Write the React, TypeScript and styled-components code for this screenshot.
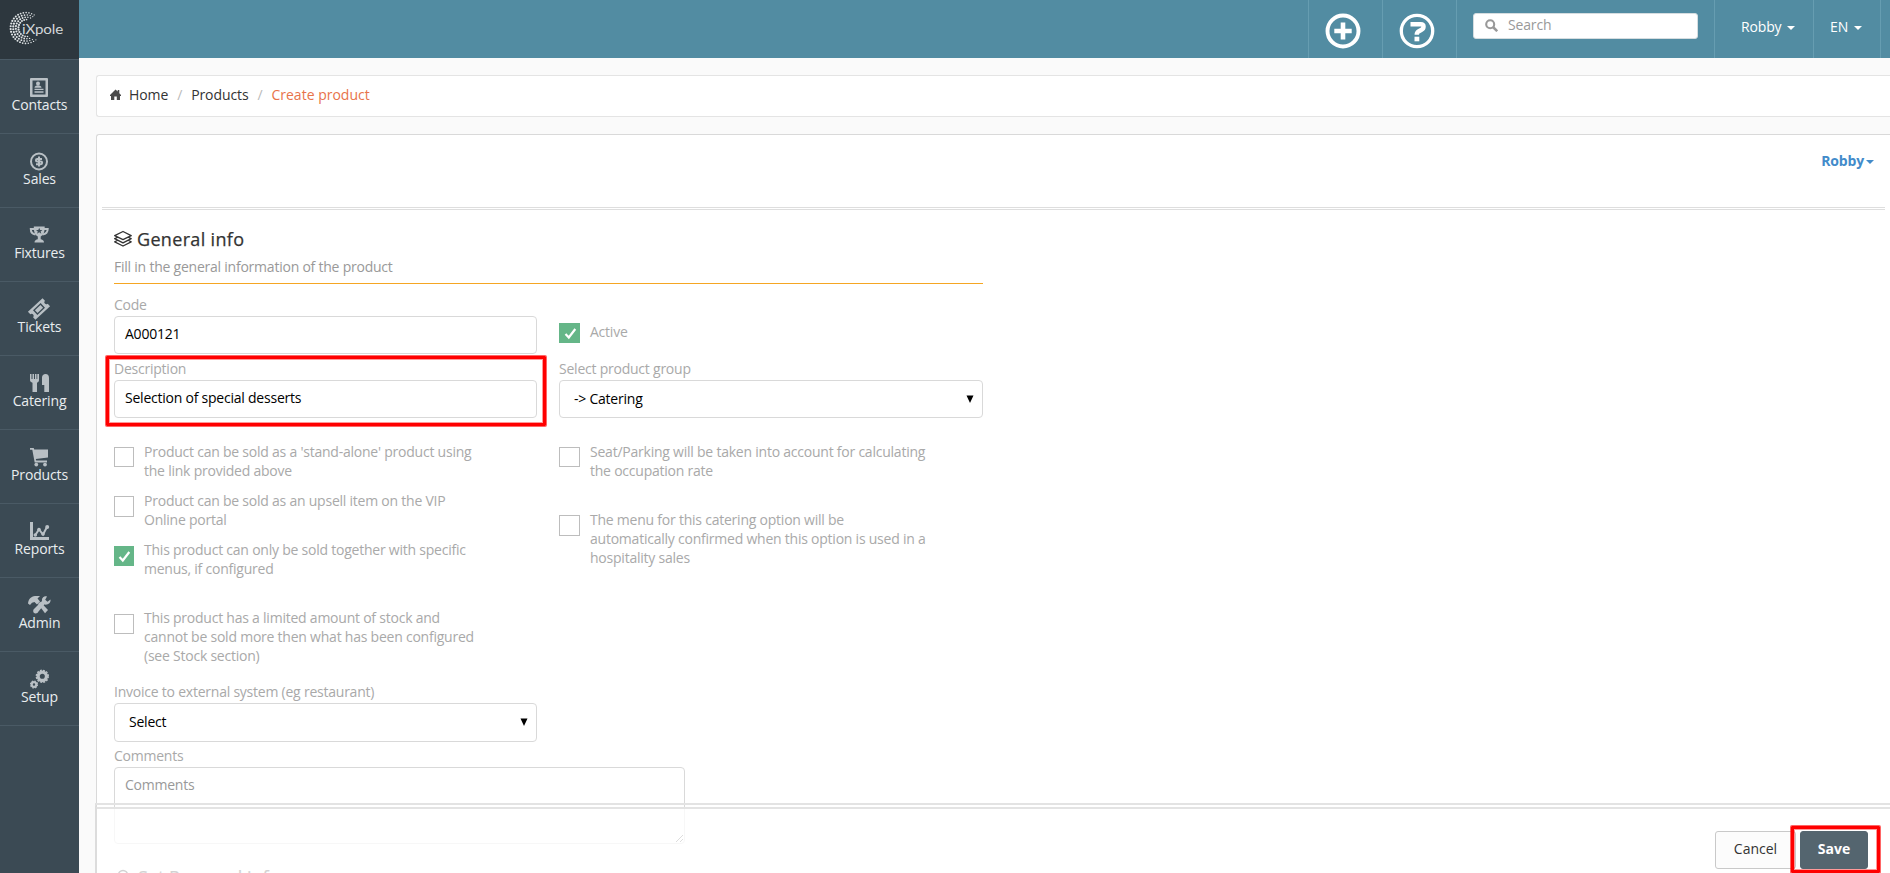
import React from "react";
import styled, { createGlobalStyle } from "styled-components";

const Global = createGlobalStyle`
  * { box-sizing: border-box; }
  html, body { margin: 0; padding: 0; overflow: hidden; }
  body { font-family: "Open Sans", "Noto Sans", sans-serif; font-size: 14px; line-height: 20px; color: #333; background: #fafafa; letter-spacing: -0.15px; }
  input, select, textarea, button { font: inherit; letter-spacing: inherit; }
`;

const Page = styled.div`
  position: relative;
  display: flex;
  width: 1890px;
  height: 873px;
  overflow: hidden;
`;
const Sidebar = styled.nav`
  width: 79px;
  flex: none;
  background: #3b4a54;
`;
const Logo = styled.div`
  height: 59px;
  background: #2d373e;
  svg { display: block; }
`;
const NavItem = styled.a<{ $last?: boolean }>`
  display: flex;
  flex-direction: column;
  align-items: center;
  height: ${(p) => (p.$last ? 75 : 74)}px;
  padding-top: 18px;
  border-top: 1px solid #4a5a65;
  border-bottom: ${(p) => (p.$last ? "1px solid #4a5a65" : "none")};
  color: #e9edef;
  line-height: 18px;
  svg { display: block; margin: 0 1px -1px 0; color: #b9c0c5; overflow: visible; }
`;
const Main = styled.div`
  flex: 1;
  min-width: 0;
  display: flex;
  flex-direction: column;
`;
const Header = styled.header`
  display: flex;
  justify-content: flex-end;
  height: 58px;
  flex: none;
  background: #528ca2;
`;
const HeaderCell = styled.div<{ $w: number; $pad?: string }>`
  width: ${(p) => p.$w}px;
  padding: ${(p) => p.$pad ?? "0"};
  border-left: 1px solid #669db1;
  color: #fff;
`;
const SearchBox = styled.label`
  display: flex;
  align-items: center;
  width: 225px;
  height: 26px;
  padding: 0 0 2px 11px;
  border: 1px solid #d5dde0;
  border-radius: 3px;
  background: #fff;
  color: #999;
  input { border: 0; outline: 0; padding: 0 0 1px; margin-left: 10px; width: 160px; color: #666; background: none; }
  input::placeholder { color: #999; opacity: 1; }
`;
const Caret = styled.i<{ $gap: number }>`
  display: inline-block;
  margin-left: ${(p) => p.$gap}px;
  vertical-align: middle;
  border: 4px solid transparent;
  border-top-color: currentColor;
  border-bottom: 0;
`;
const Content = styled.main`
  flex: 1;
  min-height: 0;
  display: flex;
  flex-direction: column;
  gap: 17px;
  padding: 17px 0 0 17px;
`;
const Crumbs = styled.div`
  display: flex;
  flex: none;
  align-items: center;
  height: 42px;
  padding: 0 0 3px 13px;
  border: 1px solid #e4e4e4;
  border-right: 0;
  border-radius: 3px 0 0 3px;
  background: #fff;
  letter-spacing: -0.1px;
  svg { margin-right: 8px; }
`;
const Slash = styled.span`
  width: 23px;
  text-align: center;
  color: #bbb;
`;
const Current = styled.span`
  color: #e8734a;
  letter-spacing: 0;
`;
const Panel = styled.section`
  flex: 1;
  min-height: 0;
  border: 1px solid #d9d9d9;
  border-right: 0;
  border-bottom: 0;
  border-radius: 3px 0 0 0;
  background: #fff;
  padding: 0 5px;
`;
const PanelTop = styled.div`
  display: flex;
  justify-content: flex-end;
  height: 75px;
  padding: 16px 11px 0 0;
  border-bottom: 3px double #dedede;
  color: #428bca;
  font-weight: 700;
`;
const Form = styled.div`
  width: 869px;
  margin-left: 12px;
  letter-spacing: -0.23px;
`;
const Title = styled.h2<{ $spacing?: number }>`
  display: flex;
  align-items: center;
  height: 26px;
  margin: 0;
  font-size: 18px;
  font-weight: 500;
  line-height: 26px;
  letter-spacing: ${(p) => p.$spacing ?? 0}px;
  -webkit-text-stroke: 0.25px currentColor;
  svg { margin-right: 4px; }
`;
const SectionHead = styled.div<{ $top?: number }>`
  height: 74px;
  padding-top: ${(p) => p.$top ?? 16}px;
  border-bottom: 1px solid #f5a623;
`;
const Hint = styled.div`
  margin-top: 5px;
  color: #999;
`;
const Columns = styled.div<{ $top: number }>`
  display: grid;
  grid-template-columns: 423px 424px;
  column-gap: 22px;
  padding-top: ${(p) => p.$top}px;
`;
const Field = styled.div`
  height: 64px;
`;
const Label = styled.div`
  height: 21px;
  color: #a9a9a9;
`;
const Box = styled.div<{ $select?: boolean; $tall?: boolean }>`
  display: flex;
  align-items: center;
  justify-content: space-between;
  height: ${(p) => (p.$tall ? 39 : 38)}px;
  padding: 0 ${(p) => (p.$select ? "8px 1px 14px" : "10px 3px 10px")};
  border: 1px solid #d9d9d9;
  border-radius: 4px;
  color: #000;
  background: #fff;
`;
const TextArea = styled.textarea`
  display: block;
  width: 571px;
  height: 77px;
  padding: 7px 10px;
  border: 1px solid #d9d9d9;
  border-radius: 4px;
  outline: 0;
  &::placeholder { color: #999; opacity: 1; }
`;
const CheckRow = styled.div<{ $h: number; $top?: number }>`
  display: flex;
  height: ${(p) => p.$h}px;
  padding-top: ${(p) => p.$top ?? 0}px;
  line-height: 19px;
  white-space: pre-line;
  color: #a9a9a9;
`;
const Check = styled.span<{ $on?: boolean; $top: number; $w: number; $tall: number }>`
  width: ${(p) => p.$w}px;
  height: ${(p) => p.$tall}px;
  flex: none;
  margin: ${(p) => p.$top}px 10px 0 0;
  border: ${(p) => (p.$on ? "none" : "1px solid #bdbdbd")};
  background: ${(p) => (p.$on ? "#65b688" : "#fff")};
  svg { display: block; margin: 0 auto; }
`;
const Footer = styled.footer`
  position: absolute;
  left: 95px;
  right: 0;
  bottom: 0;
  height: 70px;
  display: flex;
  justify-content: flex-end;
  gap: 4px;
  padding: 22px 22px 0 0;
  border-top: 6px double #e3e3e3;
  border-left: 2px solid #dcdcdc;
  background: rgba(255, 255, 255, 0.78);
  background-clip: padding-box;
`;
const Button = styled.button<{ $primary?: boolean }>`
  width: ${(p) => (p.$primary ? 68 : 81)}px;
  height: 38px;
  padding: 0 0 2px;
  border: 1px solid ${(p) => (p.$primary ? "#54656f" : "#c9c9c9")};
  border-radius: 3px;
  background: ${(p) => (p.$primary ? "#54656f" : "#fcfcfc")};
  color: ${(p) => (p.$primary ? "#fff" : "#333")};
  font-weight: ${(p) => (p.$primary ? 700 : 400)};
  letter-spacing: 0;
`;
const Highlight = styled.div<{ $x: number; $y: number; $w: number; $h: number }>`
  position: absolute;
  left: ${(p) => p.$x}px;
  top: ${(p) => p.$y}px;
  width: ${(p) => p.$w}px;
  height: ${(p) => p.$h}px;
  border: 3px solid #f00;
  border-radius: 1px;
  box-shadow: 0 0 0 1px rgba(255, 0, 0, 0.6), inset 0 0 0 1px rgba(255, 0, 0, 0.4);
  pointer-events: none;
`;

const icons: Record<string, React.ReactNode> = {
  Contacts: (
    <g fill="currentColor">
      <path fillRule="evenodd" d="M1 0h16a1 1 0 0 1 1 1v17a1 1 0 0 1-1 1H1a1 1 0 0 1-1-1V1a1 1 0 0 1 1-1zM2.500 2.500v14h13v-14z" />
      <circle cx="8" cy="5.500" r="2" />
      <path d="M4.500 9.800c0-1.800 1.500-2 3.500-2.500 2 .5 3.500.7 3.500 2.500zM4.500 10.800h9v1.300h-9zM4.500 13.300h9v1.400h-9z" />
    </g>
  ),
  Sales: (
    <g fill="none" stroke="currentColor">
      <circle cx="9" cy="9.500" r="8" strokeWidth="2" />
      <path d="M12 7H7.200a1.200 1.200 0 0 0 0 2.500h3.600a1.200 1.200 0 0 1 0 2.700H6M9 4.500v10" strokeWidth="2" />
    </g>
  ),
  Fixtures: (
    <g>
      <path fill="none" stroke="currentColor" strokeWidth="2" d="M4 3H.8c0 3.500 1.500 5 4.700 5.500M14 3h3.700c0 3.500-2 5-5.200 5.500" />
      <path fill="currentColor" d="M3.800 .5h10.900c0 5-.9 8.500-4 10v2.700c1.500.3 3.300 1 3.300 3.300H4.500c0-2.300 1.800-3 3.300-3.300v-2.700C4.700 9 3.800 5.500 3.800 .5z" />
      <path fill="#3b4a54" d="M9.200 1.800l.9 2.200h2.300l-1.800 1.400.7 2.300-2.100-1.400-2.100 1.400.7-2.300L6 4h2.300z" />
    </g>
  ),
  Tickets: (
    <g transform="rotate(-43 9 9)">
      <path fill="currentColor" fillRule="evenodd" d="M-1 3.500h20v3.500a2 2 0 0 0 0 4v3.500H-1v-3.500a2 2 0 0 0 0-4zM3.800 5.800v6.400h10.400V5.800zM5.200 7.100h7.600v3.800H5.200z" />
    </g>
  ),
  Catering: (
    <path fill="currentColor" d="M0 0h1.500v5h1V0H4v5h1V0h1.500v5h.8V0H9v6c0 1.500-.8 2-2 2.700V18H2.500V8.700C1 8 0 7.500 0 6zM12 3.500c0-2.300 1.500-3.500 3.500-3.500 2.300 0 3.500 1.500 3.500 4v14h-4.700v-7H12z" />
  ),
  Products: (
    <g fill="currentColor">
      <path d="M0 0h3.700l.5 1.500H18v8L5.800 11l.4 1.500H17v2H4.700L2.300 1.800H0z" />
      <circle cx="6.300" cy="16.600" r="1.900" /><circle cx="15" cy="16.600" r="1.900" />
    </g>
  ),
  Reports: (
    <g fill="none" stroke="currentColor">
      <path d="M1.500 0v16.500H19" strokeWidth="3" />
      <path d="M5 13.500L9 7.500l4 5L17 5" strokeWidth="2" />
      <g fill="currentColor" stroke="none"><circle cx="5.300" cy="13" r="1.800" /><circle cx="9" cy="7.500" r="1.800" /><circle cx="13" cy="12" r="1.800" /><circle cx="17.200" cy="5" r="2" /></g>
    </g>
  ),
  Admin: (
    <g fill="currentColor">
      <path d="M-2 7.500C-1.500 3 1 .5 5 0h5L7.500 2.500 10 5.500 7 8.500 4.500 6 2 6.800 0 9z" />
      <path d="M8 8l2.300-2.300L18 14l-3 3.300z" />
      <path d="M20.500 3.500l-3 2.300-2.300-2L17 .5c-3-1-5.500 1.500-5 4.500L4 13c-1.500 1.500-.8 4.300 1.500 4.500 1.300.1 2.300-.8 2.800-1.700l6-7.300c3.700.7 6.700-1.500 6.200-5z" />
    </g>
  ),
  Setup: (
    <g fill="none" stroke="currentColor">
      <circle cx="12.300" cy="6.300" r="4.200" strokeWidth="3.300" />
      <circle cx="12.300" cy="6.300" r="6" strokeWidth="1.400" strokeDasharray="1.900 1.240" />
      <circle cx="4" cy="14.500" r="2.300" strokeWidth="2.200" />
      <circle cx="4" cy="14.500" r="3.500" strokeWidth="1.200" strokeDasharray="1.500 1.250" />
    </g>
  ),
};

const LogoMark = () => {
  const dots: React.ReactNode[] = [];
  for (let ring = 0; ring < 4; ring++) {
    const r = 15.4 - ring * 2.3;
    const end = 312 - ring * 10;
    for (let a = 50 + ring * 12; a < end; a += 10.5 + ring * 2) {
      const t = (a * Math.PI) / 180;
      const edge = Math.sin(((a - 30) / 300) * Math.PI);
      dots.push(<circle key={`${ring}-${a}`} cx={26 + ring * 0.3 + r * Math.cos(t)} cy={28 + r * Math.sin(t)} r={0.45 + 0.65 * Math.max(0, edge)} />);
    }
  }
  return (
    <svg width="79" height="59" viewBox="0 0 79 59">
      <g fill="#dfe3e5">{dots}</g>
      <text x="22" y="34" fontFamily="Lato, sans-serif" fontSize="14" fontWeight="400" fill="#d3d8da" textLength="41" lengthAdjust="spacingAndGlyphs">iXpole</text>
    </svg>
  );
};

const Tick = () => (
  <svg width="20" height="20" viewBox="0 0 20 20">
    <path d="M5.500 11l3.300 3.500L15.300 6" fill="none" stroke="#fff" strokeWidth="2.200" />
  </svg>
);
const Layers = () => (
  <svg width="19" height="18" viewBox="0 0 19 18" fill="none" stroke="#333" strokeWidth="1.300" strokeLinejoin="round">
    <path d="M9 1.500L17.200 5.600 9 9.700 .7 5.600zM3.200 7.500L.7 8.700l8.300 4.100 8.200-4.100-2.500-1.200M3.200 10.500L.7 11.800 9 16l8.200-4.200-2.500-1.300" />
  </svg>
);
const Arrow = () => (
  <svg width="8" height="8" viewBox="0 0 8 8"><path d="M.5 .5h7L4 8z" fill="#000" /></svg>
);

type CheckItemProps = { h: number; on?: boolean; text: string; top?: number; boxTop?: number; w?: number; tall?: number };
const CheckItem = ({ h, on, text, top = 0, boxTop = 5, w = 20, tall = 20 }: CheckItemProps) => (
  <CheckRow $h={h} $top={top}>
    <Check $on={on} $top={boxTop} $w={w} $tall={tall}>{on && <Tick />}</Check>
    <span>{text}</span>
  </CheckRow>
);

export default function App() {
  const names = Object.keys(icons);
  return (
    <Page>
      <Global />
      <Sidebar>
        <Logo><LogoMark /></Logo>
        {names.map((n, i) => (
          <NavItem key={n} $last={i === names.length - 1}>
            <svg width="18" height="19" viewBox="0 0 18 19">{icons[n]}</svg>
            {n}
          </NavItem>
        ))}
      </Sidebar>
      <Main>
        <Header>
          <HeaderCell $w={74} $pad="13px 0 0 16px">
            <svg width="36" height="36" viewBox="0 0 36 36" fill="none" stroke="#fff">
              <circle cx="18" cy="18" r="15.500" strokeWidth="3.900" />
              <path d="M18 9.500v17M9.300 18h17.400" strokeWidth="4.600" />
            </svg>
          </HeaderCell>
          <HeaderCell $w={74} $pad="13px 0 0 16px">
            <svg width="36" height="36" viewBox="0 0 36 36" fill="none" stroke="#fff">
              <circle cx="18" cy="18" r="15.700" strokeWidth="3.300" />
              <path d="M11.500 11.200h10.300q2.700 0 2.700 2.300t-2 3.300l-3 1.600q-1.700 1-1.700 3.300" strokeWidth="4.500" />
              <path d="M15.500 26h4.800" strokeWidth="4.600" />
            </svg>
          </HeaderCell>
          <HeaderCell $w={258} $pad="13px 0 0 16px">
            <SearchBox>
              <svg width="13" height="13" viewBox="0 0 13 13" fill="none" stroke="#999">
                <circle cx="5.200" cy="5.200" r="4" strokeWidth="2.100" /><path d="M8 8l4.200 4.200" strokeWidth="2.500" />
              </svg>
              <input placeholder="Search" />
            </SearchBox>
          </HeaderCell>
          <HeaderCell $w={99} $pad="17px 0 0 26px">Robby<Caret $gap={6} /></HeaderCell>
          <HeaderCell $w={67} $pad="17px 0 0 16px">EN<Caret $gap={6} /></HeaderCell>
          <HeaderCell $w={10} />
        </Header>
        <Content>
          <Crumbs>
            <svg width="11" height="11" viewBox="0 0 11 11" fill="#4a4a4a"><path d="M5.500 .5L7.700 2.600V1h1.600v3.200L11 6v1h-1v4H6.800V7.500H4.300V11H1V7H0V6z" /></svg>
            Home<Slash>/</Slash>Products<Slash>/</Slash><Current>Create product</Current>
          </Crumbs>
          <Panel>
            <PanelTop><span>Robby<Caret $gap={2} /></span></PanelTop>
            <Form>
              <SectionHead>
                <Title $spacing={0.33}><Layers />General info</Title>
                <Hint>Fill in the general information of the product</Hint>
              </SectionHead>
              <Columns $top={11}>
                <div>
                  <Field><Label>Code</Label><Box>A000121</Box></Field>
                  <Field><Label>Description</Label><Box>Selection of special desserts</Box></Field>
                </div>
                <div>
                  <CheckItem h={64} top={27} boxTop={1} w={21} on text="Active" />
                  <Field><Label>Select product group</Label><Box $select><span>-&gt; Catering</span><Arrow /></Box></Field>
                </div>
              </Columns>
              <Columns $top={19}>
                <div>
                  <CheckItem h={49} text={"Product can be sold as a 'stand-alone' product using\nthe link provided above"} />
                  <CheckItem h={49} tall={21} text={"Product can be sold as an upsell item on the VIP\nOnline portal"} />
                  <CheckItem h={68} boxTop={6} on text={"This product can only be sold together with specific\nmenus, if configured"} />
                  <CheckItem h={74} boxTop={6} text={"This product has a limited amount of stock and\ncannot be sold more then what has been configured\n(see Stock section)"} />
                </div>
                <div>
                  <CheckItem h={68} w={21} text={"Seat/Parking will be taken into account for calculating\nthe occupation rate"} />
                  <CheckItem h={68} w={21} tall={21} text={"The menu for this catering option will be\nautomatically confirmed when this option is used in a\nhospitality sales"} />
                </div>
              </Columns>
              <Columns $top={0}>
                <div>
                  <Field><Label>Invoice to external system (eg restaurant)</Label><Box $select $tall><span>Select</span><Arrow /></Box></Field>
                  <Label>Comments</Label>
                  <TextArea placeholder="Comments" />
                </div>
              </Columns>
              <SectionHead $top={20}>
                <Title>
                  <svg width="20" height="18" viewBox="0 0 20 18" fill="none" stroke="#333" strokeWidth="1.500"><circle cx="9" cy="7" r="4.500" /><path d="M1.500 18q0-5 7.500-5t7.500 5" /></svg>
                  Set Personal info
                </Title>
              </SectionHead>
            </Form>
          </Panel>
        </Content>
      </Main>
      <Footer>
        <Button>Cancel</Button>
        <Button $primary>Save</Button>
      </Footer>
      <Highlight $x={106} $y={356} $w={440} $h={70} />
      <Highlight $x={1791} $y={826} $w={89} $h={47} />
    </Page>
  );
}
